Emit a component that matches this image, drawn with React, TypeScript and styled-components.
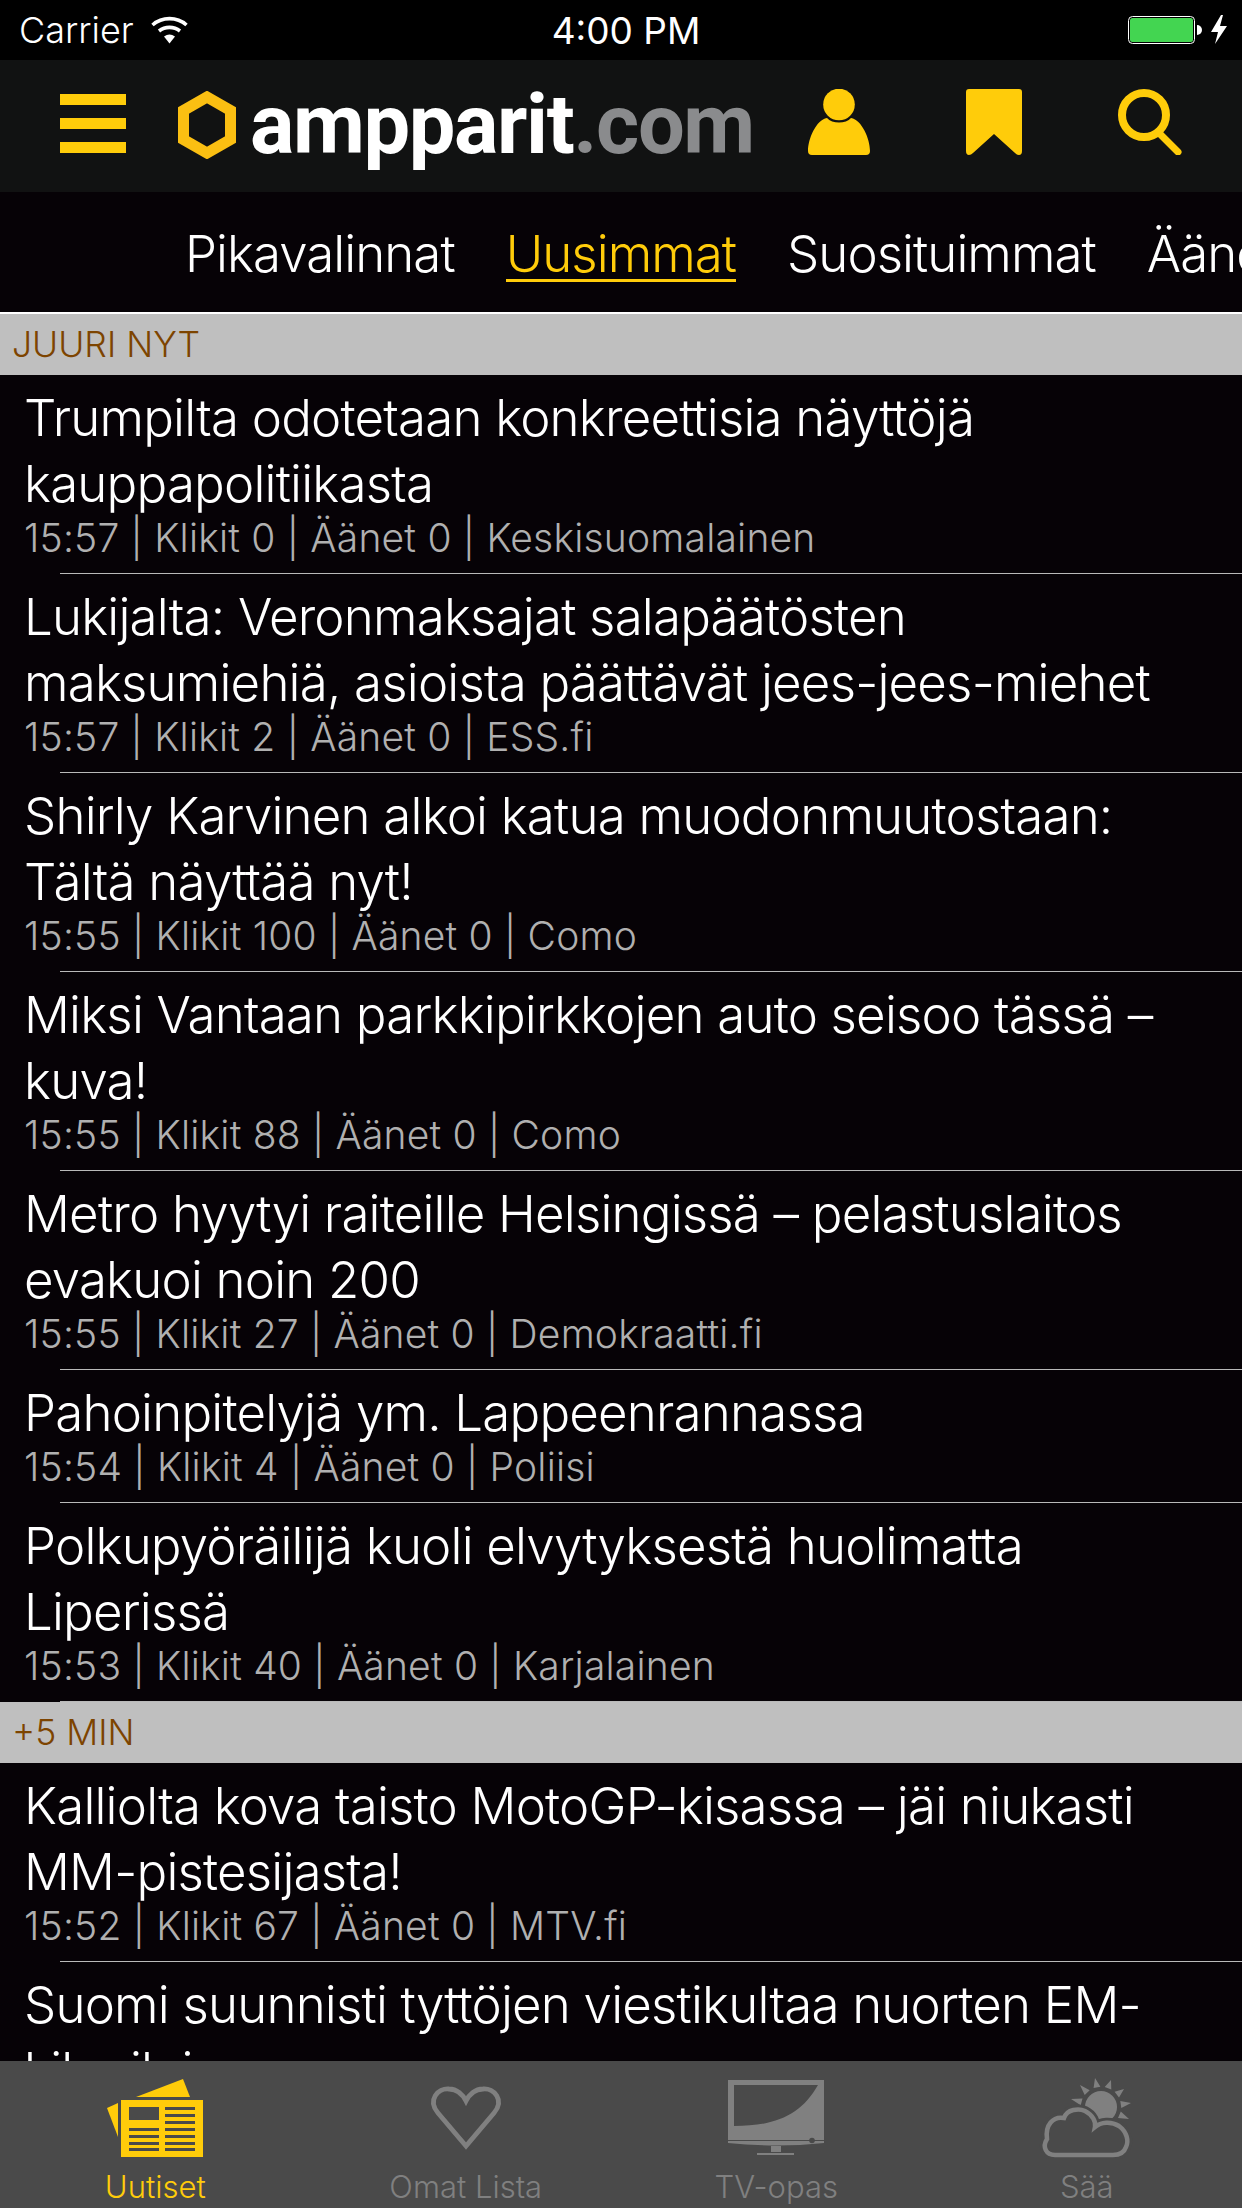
import React from 'react'
import styled, { createGlobalStyle } from 'styled-components'

const YELLOW = '#ffcc0a'
const MUTED = '#808080'
const BAR = '#4a4a4a'

const GlobalStyle = createGlobalStyle`
  html, body {
    margin: 0;
    padding: 0;
    background: #060206;
  }
`

const Page = styled.div`
  width: 1242px;
  height: 2208px;
  display: flex;
  flex-direction: column;
  overflow: hidden;
  background: #060206;
  font-family: Inter, "Noto Sans", sans-serif;
`

const StatusBar = styled.div`
  height: 60px;
  flex: none;
  background: #000;
  color: #fff;
  display: grid;
  grid-template-columns: 1fr auto 1fr;
  align-items: center;
  padding: 0 15px 0 19px;
`

const StatusLeft = styled.div`
  display: flex;
  align-items: center;
  gap: 17px;
  font-size: 36px;
  font-weight: 300;
`

const StatusTime = styled.div`
  font-size: 37px;
  font-weight: 400;
  margin-left: 6px;
`

const StatusRight = styled.div`
  display: flex;
  align-items: center;
  justify-content: flex-end;
`

const Header = styled.div`
  height: 132px;
  flex: none;
  background: #111212;
  display: flex;
  align-items: center;
  padding-left: 60px;
`

const MenuButton = styled.div`
  width: 66px;
  display: flex;
  flex-direction: column;
  gap: 13px;
  margin-right: 52px;
  padding-bottom: 6px;
`

const MenuLine = styled.div`
  height: 11px;
  background: ${YELLOW};
`

const Logo = styled.div`
  display: flex;
  align-items: center;
  width: 630px;
  padding-bottom: 2px;
`

const LogoText = styled.div`
  margin-left: 14px;
  font-family: Roboto, sans-serif;
  font-weight: 700;
  font-size: 83px;
  letter-spacing: -1.4px;
  line-height: 68px;
  color: #fff;
  white-space: nowrap;
`

const LogoSuffix = styled.span`
  color: #8a8b8d;
`

const HeaderIcon = styled.svg<{ $gap: number }>`
  display: block;
  flex: none;
  margin-left: ${(p) => p.$gap}px;
  margin-bottom: 9px;
`

const Tabs = styled.div`
  height: 120px;
  box-sizing: border-box;
  flex: none;
  display: flex;
  align-items: center;
  gap: 51px;
  padding: 6px 0 0 185px;
  overflow: hidden;
  white-space: nowrap;
`

const Tab = styled.div<{ $active?: boolean }>`
  flex: none;
  font-size: 51px;
  font-weight: 300;
  letter-spacing: -0.95px;
  color: ${(p) => (p.$active ? YELLOW : '#fff')};
  border-bottom: 3px solid ${(p) => (p.$active ? YELLOW : 'transparent')};
  line-height: 50px;
`

const List = styled.div`
  flex: 1;
  min-height: 0;
  overflow: hidden;
  border-top: 2px solid #fff;
`

const SectionHeader = styled.div`
  height: 61px;
  padding-left: 12px;
  box-sizing: border-box;
  display: flex;
  align-items: center;
  background: #bfbfbf;
  color: #7d4400;
  font-size: 35.5px;
  font-weight: 300;
`

const Row = styled.div`
  position: relative;
  padding: 10px 0 14px 24px;
`

const Separator = styled.div`
  position: absolute;
  left: 60px;
  right: 0;
  bottom: 0;
  height: 1px;
  background: #b9b9b9;
`

const Title = styled.div`
  font-size: 51px;
  line-height: 66px;
  font-weight: 300;
  letter-spacing: -0.8px;
  color: #fff;
`

const Meta = styled.div`
  font-size: 39px;
  line-height: 41px;
  padding-bottom: 2px;
  font-weight: 300;
  letter-spacing: 0.2px;
  color: #b0b0b0;
`

const TabBar = styled.div`
  height: 147px;
  flex: none;
  background: ${BAR};
  display: grid;
  grid-template-columns: repeat(4, 1fr);
`

const TabBarItem = styled.div<{ $active?: boolean }>`
  display: flex;
  flex-direction: column;
  align-items: center;
  color: ${(p) => (p.$active ? YELLOW : MUTED)};
  font-size: 31px;
  font-weight: 300;
  line-height: 36px;
`

const TabBarIcon = styled.svg`
  display: block;
  margin-top: 14px;
  margin-bottom: 10px;
`

type NewsItem = { title: string[]; meta: string }

const juuriNyt: NewsItem[] = [
  { title: ['Trumpilta odotetaan konkreettisia näyttöjä', 'kauppapolitiikasta'], meta: '15:57 | Klikit 0 | Äänet 0 | Keskisuomalainen' },
  { title: ['Lukijalta: Veronmaksajat salapäätösten', 'maksumiehiä, asioista päättävät jees-jees-miehet'], meta: '15:57 | Klikit 2 | Äänet 0 | ESS.fi' },
  { title: ['Shirly Karvinen alkoi katua muodonmuutostaan:', 'Tältä näyttää nyt!'], meta: '15:55 | Klikit 100 | Äänet 0 | Como' },
  { title: ['Miksi Vantaan parkkipirkkojen auto seisoo tässä –', 'kuva!'], meta: '15:55 | Klikit 88 | Äänet 0 | Como' },
  { title: ['Metro hyytyi raiteille Helsingissä – pelastuslaitos', 'evakuoi noin 200'], meta: '15:55 | Klikit 27 | Äänet 0 | Demokraatti.fi' },
  { title: ['Pahoinpitelyjä ym. Lappeenrannassa'], meta: '15:54 | Klikit 4 | Äänet 0 | Poliisi' },
  { title: ['Polkupyöräilijä kuoli elvytyksestä huolimatta', 'Liperissä'], meta: '15:53 | Klikit 40 | Äänet 0 | Karjalainen' },
]

const plusFive: NewsItem[] = [
  { title: ['Kalliolta kova taisto MotoGP-kisassa – jäi niukasti', 'MM-pistesijasta!'], meta: '15:52 | Klikit 67 | Äänet 0 | MTV.fi' },
  { title: ['Suomi suunnisti tyttöjen viestikultaa nuorten EM-', 'kilpailuissa'], meta: '15:52 | Klikit 12 | Äänet 0 | Yle' },
]

const News = ({ items }: { items: NewsItem[] }) => (
  <>
    {items.map((item) => (
      <Row key={item.meta}>
        <Title>
          {item.title.map((line) => (
            <div key={line}>{line}</div>
          ))}
        </Title>
        <Meta>{item.meta}</Meta>
        <Separator />
      </Row>
    ))}
  </>
)

const App = () => (
  <Page>
    <GlobalStyle />
    <StatusBar>
      <StatusLeft>
        Carrier
        <svg width="37" height="28" viewBox="0 0 37 28">
          <path d="M1.500 9 A26 26 0 0 1 35.500 9" fill="none" stroke="#fff" strokeWidth="3.6" />
          <path d="M8 15 A17 17 0 0 1 29 15" fill="none" stroke="#fff" strokeWidth="3.6" />
          <path d="M13 20.500 L18.500 27.500 L24 20.500 A9.500 9.500 0 0 0 13 20.500 Z" fill="#fff" />
        </svg>
      </StatusLeft>
      <StatusTime>4:00 PM</StatusTime>
      <StatusRight>
        <svg width="99" height="32" viewBox="0 0 99 32">
          <rect x="0.500" y="2.500" width="66" height="27" rx="4" fill="none" stroke="#fff" />
          <rect x="2" y="4" width="63" height="24" rx="2.500" fill="#43d551" />
          <path d="M69 11 A5 5 0 0 1 69 21 Z" fill="#fff" />
          <path d="M93 1 L83 18 H90 L87 30 L99 12 H92 L95 1 Z" fill="#fff" />
        </svg>
      </StatusRight>
    </StatusBar>

    <Header>
      <MenuButton>
        <MenuLine />
        <MenuLine />
        <MenuLine />
      </MenuButton>
      <Logo>
        <svg width="58" height="68" viewBox="0 0 58 68">
          <path d="M29 6 L52.500 19.500 V48.500 L29 62 L5.500 48.500 V19.500 Z" fill="none" stroke="#fbbf12" strokeWidth="11" />
        </svg>
        <LogoText>
          ampparit<LogoSuffix>.com</LogoSuffix>
        </LogoText>
      </Logo>
      <HeaderIcon width="62" height="66" viewBox="0 0 62 66" $gap={0}>
        <circle cx="31" cy="15.500" r="15.800" fill={YELLOW} />
        <path d="M19 29 C24 35 38 35 43 29 C54 31 62 50 62 62 Q62 66 58 66 H4 Q0 66 0 62 C0 50 8 31 19 29 Z" fill={YELLOW} />
      </HeaderIcon>
      <HeaderIcon width="56" height="66" viewBox="0 0 56 66" $gap={96}>
        <path d="M3 0 H53 Q56 0 56 3 V62 Q56 66 53 66 Q51 66 49 64 L28 45 L7 64 Q5 66 3 66 Q0 66 0 62 V3 Q0 0 3 0 Z" fill={YELLOW} />
      </HeaderIcon>
      <HeaderIcon width="64" height="66" viewBox="0 0 64 66" $gap={96}>
        <circle cx="26" cy="26" r="22" fill="none" stroke={YELLOW} strokeWidth="8" />
        <path d="M41 44 L60 63" fill="none" stroke={YELLOW} strokeWidth="7" strokeLinecap="round" />
      </HeaderIcon>
    </Header>

    <Tabs>
      <Tab>Pikavalinnat</Tab>
      <Tab $active>Uusimmat</Tab>
      <Tab>Suosituimmat</Tab>
      <Tab>Äänestetyimmät</Tab>
    </Tabs>

    <List>
      <SectionHeader>JUURI NYT</SectionHeader>
      <News items={juuriNyt} />
      <SectionHeader>+5 MIN</SectionHeader>
      <News items={plusFive} />
    </List>

    <TabBar>
      <TabBarItem $active>
        <TabBarIcon width="100" height="84" viewBox="0 0 100 84">
          <path d="M31 22 L78 4 L85 22 Z" fill={YELLOW} />
          <path d="M2 33 L13 28 L13 62 Z" fill={YELLOW} />
          <path fillRule="evenodd" d="M16 25 H98 V82 H16 Z M24 32 V45 H54 V32 Z M60 32 V35 H90 V32 Z M60 39 V42 H90 V39 Z M60 46 V49 H90 V46 Z M24 53 V56 H54 V53 Z M60 53 V56 H90 V53 Z M24 60 V63 H54 V60 Z M60 60 V63 H90 V60 Z M24 67 V70 H54 V67 Z M60 67 V70 H90 V67 Z M24 73 V76 H54 V73 Z M60 73 V76 H90 V73 Z" fill={YELLOW} />
        </TabBarIcon>
        Uutiset
      </TabBarItem>
      <TabBarItem>
        <TabBarIcon width="100" height="84" viewBox="0 0 100 84">
          <path d="M50 71 L22 38 C11 25 22 13 33 14 C41 14 47 20 50 26 C53 20 59 14 67 14 C78 13 89 25 78 38 Z" fill="none" stroke={MUTED} strokeWidth="4.800" />
        </TabBarIcon>
        Omat Lista
      </TabBarItem>
      <TabBarItem>
        <TabBarIcon width="100" height="84" viewBox="0 0 100 84">
          <path fillRule="evenodd" d="M2 5 H98 V65 H2 Z M8 10 V51 C50 51 75 40 92 10 Z" fill={MUTED} />
          <path d="M2 66 H98 V68 Q50 73 2 68 Z" fill={MUTED} />
          <circle cx="86" cy="65.500" r="2.800" fill={BAR} />
          <path d="M45 71 H55 V77 H45 Z M31 78 H68 V80 H31 Z" fill={MUTED} />
        </TabBarIcon>
        TV-opas
      </TabBarItem>
      <TabBarItem>
        <TabBarIcon width="100" height="84" viewBox="0 0 100 84">
          <path d="M58 3 L63.400 11.700 L56.600 13.100 Z M74 5 L74.300 14.400 L67.700 12 Z M87 14 L82 22.400 L77.600 16.800 Z M94 28 L84.300 32.900 L83.300 25.900 Z M92 44 L81 43 L83.800 36.600 Z M43 10 L52.700 15.200 L47.700 20 Z M34 24 L45.500 23.400 L43.700 30.200 Z" fill={MUTED} />
          <circle cx="64" cy="32" r="16" fill={MUTED} />
          <path d="M18 80 C9 80 5 72 10 64 C8 50 16 41 27 43 C30 34 42 33 48 36 C56 40 59 47 58 52 C64 47 74 46 82 51 C90 57 92 66 89 72 C87 78 82 80 76 80 Z" fill={BAR} stroke={BAR} strokeWidth="10" />
          <path d="M18 80 C9 80 5 72 10 64 C8 50 16 41 27 43 C30 34 42 33 48 36 C56 40 59 47 58 52 C64 47 74 46 82 51 C90 57 92 66 89 72 C87 78 82 80 76 80 Z" fill={BAR} stroke={MUTED} strokeWidth="4.500" />
        </TabBarIcon>
        Sää
      </TabBarItem>
    </TabBar>
  </Page>
)

export default App
